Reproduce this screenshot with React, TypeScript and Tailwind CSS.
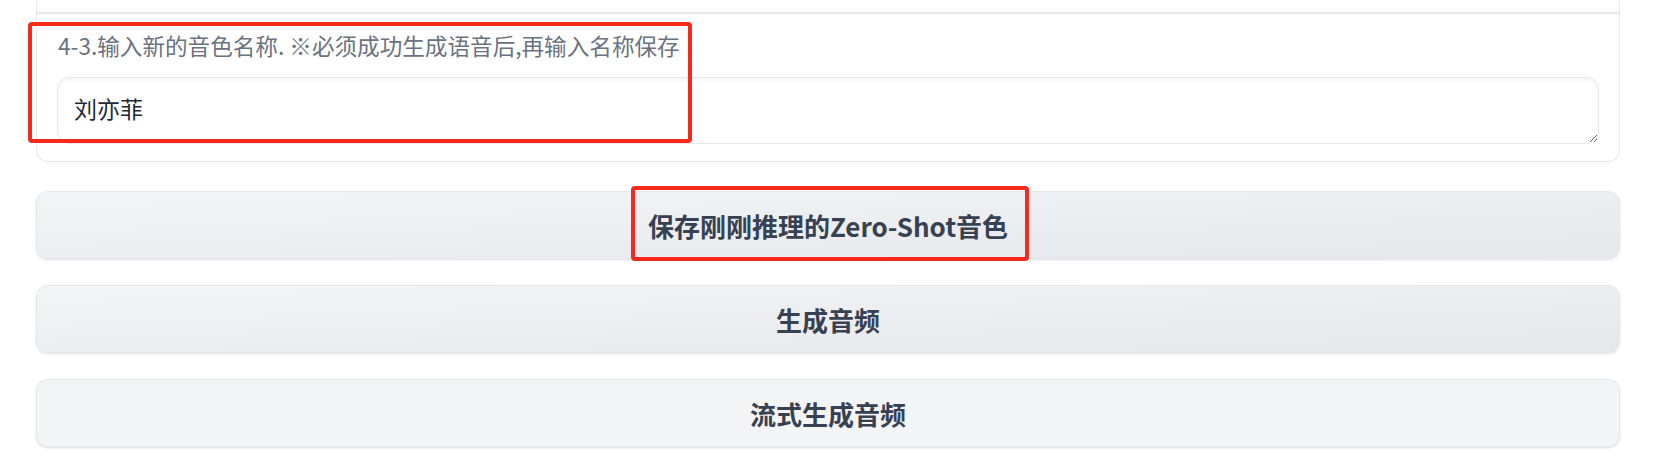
export default function App() {
    const font = { fontFamily: '"Noto Sans CJK SC", "Noto Sans", sans-serif' };
    return (
        <div className="relative min-h-screen bg-white" style={font}>
            <div className="pl-9 pr-[37px]">
                {/* form panel, its top is cut off by the screenshot */}
                <div className="rounded-b-xl border border-t-0 border-[#e5e7eb] bg-white">
                    <div className="h-3" />
                    <div className="border-t-2 border-[#e5e7eb] px-5 pt-[21px] pb-[17px]">
                        <label className="block text-[22.6px] leading-[22px] text-[#6b7280] pl-px">
                            4-3.输入新的音色名称. ※必须成功生成语音后,再输入名称保存
                        </label>
                        <textarea
                            defaultValue="刘亦菲"
                            rows={1}
                            className="mt-[20px] block h-[67px] w-full rounded-xl border border-[#e5e7eb] bg-white px-4 pt-[13px] text-[23px] leading-[34px] text-[#1f2937] shadow-[inset_0_2px_4px_rgba(0,0,0,0.05)] outline-none"
                            style={font}
                        />
                    </div>
                </div>

                <div className="mt-[29px] flex flex-col gap-[26px]">
                    <button className="h-[68px] w-full rounded-xl border border-[#e5e7eb] bg-gradient-to-br from-[#f3f4f6] to-[#e5e7eb] text-[26px] font-bold text-[#374151] shadow-sm">
                        保存刚刚推理的<span className="font-semibold">Zero-Shot</span>音色
                    </button>
                    <button className="h-[68px] w-full rounded-xl border border-[#e5e7eb] bg-gradient-to-br from-[#f3f4f6] to-[#e5e7eb] text-[26px] font-bold text-[#374151] shadow-sm">
                        生成音频
                    </button>
                    <button className="h-[68px] w-full rounded-xl border border-[#e5e7eb] bg-[#f3f4f6] text-[26px] font-bold text-[#374151] shadow-sm">
                        流式生成音频
                    </button>
                </div>
            </div>

            {/* red annotation boxes */}
            <div className="pointer-events-none absolute left-[28px] top-[22px] h-[121px] w-[664px] rounded-[4px] border-4 border-[#f5291c]" />
            <div className="pointer-events-none absolute left-[631px] top-[186px] h-[75px] w-[398px] rounded-[4px] border-4 border-[#f5291c]" />
        </div>
    );
}
